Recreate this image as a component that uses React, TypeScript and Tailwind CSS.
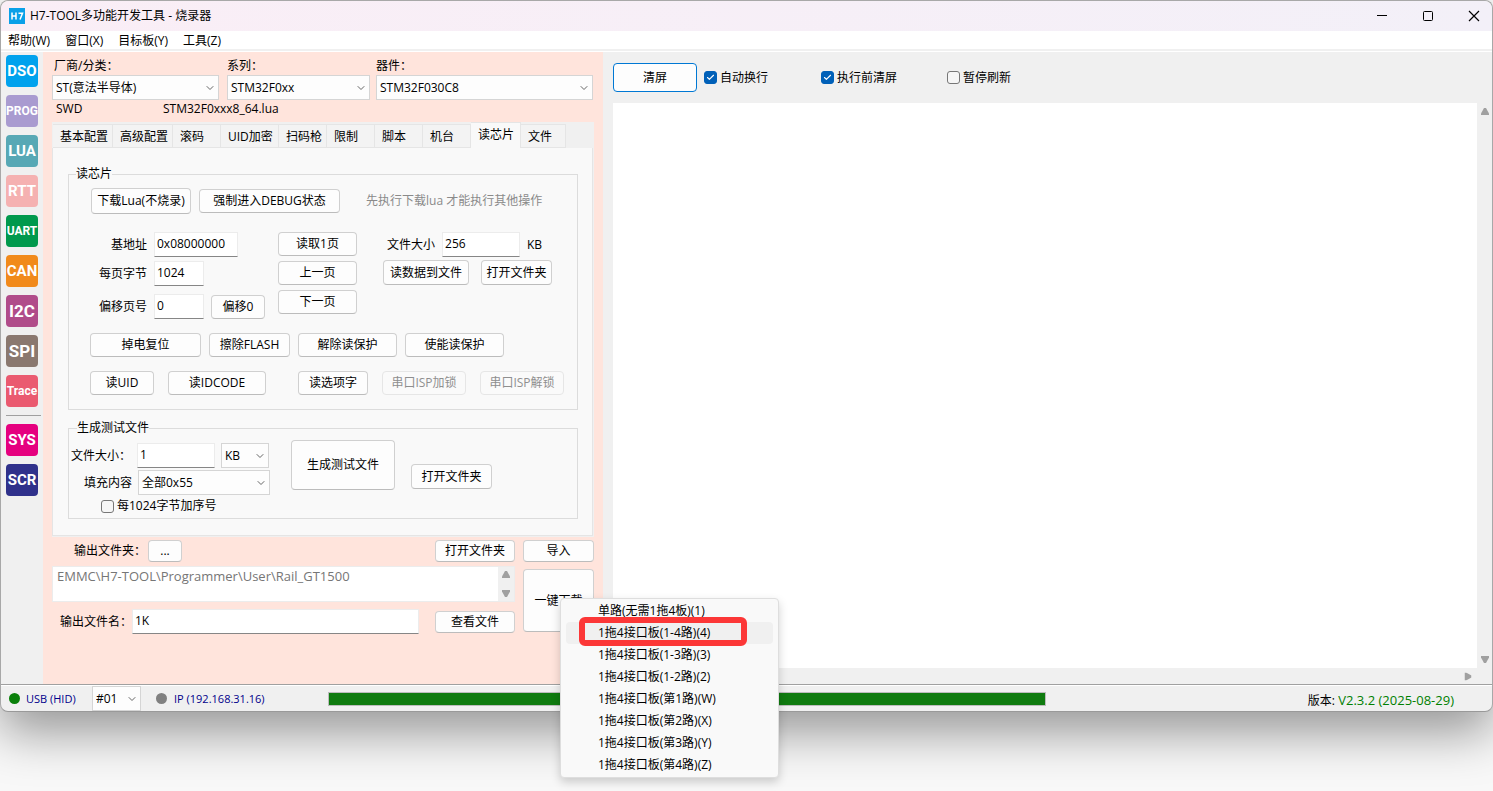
import type { ReactNode } from 'react';
import clsx from 'clsx';
import { Check, ChevronDown } from 'lucide-react';

const menus = ['帮助(W)', '窗口(X)', '目标板(Y)', '工具(Z)'];

const tools = [
  { name: 'DSO', style: 'bg-[#00a2ed] text-[15px]' },
  { name: 'PROG', style: 'bg-[#a99bd0] text-xs' },
  { name: 'LUA', style: 'bg-[#57a8b5] text-[15px]' },
  { name: 'RTT', style: 'bg-[#f5b1b1] text-[15px]' },
  { name: 'UART', style: 'bg-[#00994d] text-xs' },
  { name: 'CAN', style: 'bg-[#f18a1b] text-[15px]' },
  { name: 'I2C', style: 'bg-[#b04c8a] text-[17px]' },
  { name: 'SPI', style: 'bg-[#8a786f] text-[17px]' },
  { name: 'Trace', style: 'bg-[#ea5a70] text-xs' },
];

const systemTools = [
  { name: 'SYS', style: 'bg-[#e5007f] text-[15px]' },
  { name: 'SCR', style: 'bg-[#2f318b] text-[15px]' },
];

const tabs = [
  { label: '基本配置', width: 'w-[60px]' },
  { label: '高级配置', width: 'w-[60px]' },
  { label: '滚码', width: 'w-12' },
  { label: 'UID加密', width: 'w-[58px]' },
  { label: '扫码枪', width: 'w-12' },
  { label: '限制', width: 'w-12' },
  { label: '脚本', width: 'w-12' },
  { label: '机台', width: 'w-12' },
  { label: '读芯片', width: 'w-[50px]' },
  { label: '文件', width: 'w-[45px]' },
];

const downloadOptions = [
  '单路(无需1拖4板)(1)',
  '1拖4接口板(1-4路)(4)',
  '1拖4接口板(1-3路)(3)',
  '1拖4接口板(1-2路)(2)',
  '1拖4接口板(第1路)(W)',
  '1拖4接口板(第2路)(X)',
  '1拖4接口板(第3路)(Y)',
  '1拖4接口板(第4路)(Z)',
];

function Button({ children, className, disabled }: { children: ReactNode; className?: string; disabled?: boolean }) {
  return (
    <button
      type="button"
      disabled={disabled}
      className={clsx(
        'shrink-0 rounded border whitespace-nowrap',
        disabled ? 'border-[#e6e6e6] bg-[#fafafa] text-[#8f8f8f]' : 'border-[#d0d0d0] border-b-[#bcbcbc] bg-[#fdfdfd]',
        className,
      )}
    >
      {children}
    </button>
  );
}

function TextInput({ id, value, className }: { id: string; value: string; className?: string }) {
  return (
    <input
      id={id}
      type="text"
      defaultValue={value}
      className={clsx('h-[25px] border border-[#ececec] border-b-[#868686] bg-white px-[2px] pb-[2px]', className)}
    />
  );
}

function Select({ id, value, className, label }: { id: string; value: string; className?: string; label?: string }) {
  return (
    <div className={clsx('relative h-[25px]', className)}>
      <select
        id={id}
        aria-label={label}
        defaultValue={value}
        className="block h-full w-full appearance-none border border-[#d5d5d5] bg-[#fdfdfd] pl-[3px]"
      >
        <option>{value}</option>
      </select>
      <ChevronDown size={12} strokeWidth={2} className="pointer-events-none absolute top-[7px] right-[3px] text-[#666]" />
    </div>
  );
}

function CheckBox({ label, checked }: { label: string; checked?: boolean }) {
  return (
    <label className="flex items-center gap-[3px] whitespace-nowrap">
      <span className="grid">
        <input
          type="checkbox"
          defaultChecked={checked}
          className="peer col-start-1 row-start-1 size-[13px] appearance-none rounded-[3px] border border-[#777] bg-[#f6f6f6] checked:border-[#0060b8] checked:bg-[#0060b8]"
        />
        <Check
          size={9}
          strokeWidth={3}
          className="pointer-events-none invisible col-start-1 row-start-1 place-self-center text-white peer-checked:visible"
        />
      </span>
      {label}
    </label>
  );
}

function Triangle({ className }: { className?: string }) {
  return (
    <svg viewBox="0 0 8 7" className={clsx('h-[7px] w-2 text-[#a0a0a0]', className)} fill="currentColor">
      <path d="M3 0h2l3 5.500v1.500H0V5.500z" />
    </svg>
  );
}

function ToolButton({ name, style }: { name: string; style: string }) {
  return (
    <button
      type="button"
      className={clsx(
        'flex h-8 w-8 items-center justify-center rounded font-["Roboto",sans-serif] font-bold text-white',
        style,
      )}
    >
      {name}
    </button>
  );
}

function TitleBar() {
  return (
    <header className="flex h-[30px] items-center rounded-t-lg bg-gradient-to-r from-[#faeef6] to-[#f3f0f8] pl-2">
      <svg viewBox="0 0 16 16" className="size-4">
        <rect width="16" height="16" fill="#0aa0e8" />
        <path d="M3 4.500v7M3 8h4M7 4.500v7M9.500 5.200h4L11 11.500" fill="none" stroke="#fff" strokeWidth="1.500" />
      </svg>
      <h1 className="ml-[5px] flex-1">H7-TOOL多功能开发工具 - 烧录器</h1>
      <div className="flex gap-[10px]">
        <button type="button" aria-label="最小化" className="flex w-9 justify-center">
          <svg viewBox="0 0 12 12" className="size-3" fill="none" stroke="#000">
            <path d="M1 5.500h10" />
          </svg>
        </button>
        <button type="button" aria-label="最大化" className="flex w-9 justify-center">
          <svg viewBox="0 0 12 12" className="size-3" fill="none" stroke="#000">
            <rect x="1.500" y="1.500" width="9" height="9" rx="1" />
          </svg>
        </button>
        <button type="button" aria-label="关闭" className="flex w-9 justify-center">
          <svg viewBox="0 0 12 12" className="size-3" fill="none" stroke="#000" strokeWidth="1.200">
            <path d="M1 1l10 10M11 1L1 11" />
          </svg>
        </button>
      </div>
    </header>
  );
}

function ReadChipGroup() {
  return (
    <fieldset className="border border-[#dcdcdc] pb-[14px]">
      <legend className="ml-[7px] h-4">读芯片</legend>

      <div className="mt-[6px] ml-[22px] flex items-center gap-2">
        <Button className="h-[26px] w-[100px]">下载Lua(不烧录)</Button>
        <Button className="h-6 w-[141px]">强制进入DEBUG状态</Button>
        <span className="ml-[18px] text-[#8a8a8a]">先执行下载lua 才能执行其他操作</span>
      </div>

      <div className="mt-[18px] ml-[22px] flex items-start">
        {/* Address and page settings */}
        <div className="flex w-[187px] flex-col gap-1">
          <div className="flex items-center gap-[7px]">
            <label htmlFor="base" className="w-14 text-right">基地址</label>
            <TextInput id="base" value="0x08000000" className="w-[84px]" />
          </div>
          <div className="flex items-center gap-[7px]">
            <label htmlFor="page-size" className="w-14 text-right">每页字节</label>
            <TextInput id="page-size" value="1024" className="w-[50px]" />
          </div>
          <div className="mt-1 flex items-center gap-[7px]">
            <label htmlFor="offset" className="w-14 text-right">偏移页号</label>
            <TextInput id="offset" value="0" className="w-[50px]" />
            <Button className="h-6 w-[54px]">偏移0</Button>
          </div>
        </div>

        {/* Paging */}
        <div className="flex w-[79px] flex-col gap-[5px]">
          <Button className="h-6">读取1页</Button>
          <Button className="h-6">上一页</Button>
          <Button className="h-6">下一页</Button>
        </div>

        {/* Dump to file */}
        <div className="ml-[26px] flex flex-col gap-[3px]">
          <div className="flex items-center gap-[7px] pl-1">
            <label htmlFor="dump-size">文件大小</label>
            <TextInput id="dump-size" value="256" className="w-[78px]" />
            <span>KB</span>
          </div>
          <div className="flex gap-3">
            <Button className="h-[25px] w-[86px]">读数据到文件</Button>
            <Button className="h-[25px] w-[71px]">打开文件夹</Button>
          </div>
        </div>
      </div>

      <div className="mt-[14px] ml-[21px] flex gap-2">
        <Button className="h-6 w-[111px]">掉电复位</Button>
        <Button className="h-6 w-[81px]">擦除FLASH</Button>
        <Button className="h-6 w-[99px]">解除读保护</Button>
        <Button className="h-6 w-[99px]">使能读保护</Button>
      </div>

      <div className="mt-[14px] ml-[21px] flex gap-[14px]">
        <Button className="h-6 w-16">读UID</Button>
        <Button className="h-6 w-[98px]">读IDCODE</Button>
        <Button className="ml-[18px] h-6 w-[70px]">读选项字</Button>
        <Button disabled className="h-6 w-[84px]">串口ISP加锁</Button>
        <Button disabled className="h-6 w-[84px]">串口ISP解锁</Button>
      </div>
    </fieldset>
  );
}

function TestFileGroup() {
  return (
    <fieldset className="mt-[10px] border border-[#dcdcdc] pb-1">
      <legend className="ml-2 h-4">生成测试文件</legend>
      <div className="flex items-start">
        <div className="mt-[7px] flex w-[201px] flex-col gap-[2px]">
          <div className="flex items-center">
            <label htmlFor="test-size" className="w-[68px] pl-[2px]">文件大小：</label>
            <TextInput id="test-size" value="1" className="w-[78px]" />
            <Select id="test-unit" value="KB" label="单位" className="ml-[6px] w-12" />
          </div>
          <div className="flex items-center">
            <label htmlFor="fill" className="w-[69px] pr-[6px] text-right">填充内容</label>
            <Select id="fill" value="全部0x55" className="w-[132px]" />
          </div>
          <div className="mt-[1px] ml-8">
            <CheckBox label="每1024字节加序号" />
          </div>
        </div>
        <Button className="mt-1 ml-[21px] h-[50px] w-[104px]">生成测试文件</Button>
        <Button className="mt-7 ml-4 h-[25px] w-[81px]">打开文件夹</Button>
      </div>
    </fieldset>
  );
}

function DownloadMenu() {
  return (
    <ul
      role="menu"
      className="absolute top-[29px] left-[37px] z-10 w-[219px] rounded border border-[#dedede] bg-[#f9f9f9] py-[1px] shadow-[0_4px_10px_rgba(0,0,0,0.18)]"
    >
      {downloadOptions.map((option, index) => (
        <li key={option} role="none" className={clsx('relative mx-[5px] rounded', index === 1 && 'bg-[#f0f0f0]')}>
          <button type="button" role="menuitem" className="block h-[22px] w-full pl-8 text-left">
            {option}
          </button>
          {index === 1 && (
            <span className="pointer-events-none absolute -top-[5px] left-[13px] h-[29px] w-[168px] rounded-md border-[6px] border-[#fc3737]" />
          )}
        </li>
      ))}
    </ul>
  );
}

function OutputSection() {
  return (
    <section className="mt-[3px] flex items-start gap-2">
      <div className="w-[463px]">
        <div className="flex items-center">
          <span className="w-24 pl-[22px]">输出文件夹：</span>
          <Button className="h-[22px] w-[34px]">...</Button>
          <Button className="ml-auto h-[22px] w-20">打开文件夹</Button>
        </div>
        <div className="mt-1 flex h-9 border border-[#ececec] bg-white">
          <textarea
            readOnly
            aria-label="输出文件夹"
            className="flex-1 resize-none overflow-hidden pt-[1px] pl-1 text-[13px] text-[#767676]"
            defaultValue={'EMMC\\H7-TOOL\\Programmer\\User\\Rail_GT1500'}
          />
          <div className="flex w-4 flex-col items-center justify-between bg-[#f0f0f0] py-1">
            <Triangle />
            <Triangle className="rotate-180" />
          </div>
        </div>
        <div className="mt-[7px] flex items-center">
          <label htmlFor="out-name" className="w-20 pl-2">输出文件名：</label>
          <TextInput id="out-name" value="1K" className="w-[287px]" />
          <Button className="ml-auto h-[22px] w-20">查看文件</Button>
        </div>
      </div>
      <div className="flex w-[71px] flex-col gap-[7px]">
        <Button className="h-[22px]">导入</Button>
        <div className="relative flex flex-col">
          <Button className="h-[63px]">一键下载</Button>
          <DownloadMenu />
        </div>
      </div>
    </section>
  );
}

function ProgrammerPanel() {
  return (
    <main className="w-[560px] shrink-0 bg-[#ffe4dc] px-[9px] pt-[6px] pb-[50px]">
      <div className="flex">
        <div className="w-[167px]">
          <label htmlFor="vendor" className="mb-[1px] block pl-[2px]">厂商/分类：</label>
          <Select id="vendor" value="ST(意法半导体)" />
        </div>
        <div className="ml-2 w-[143px]">
          <label htmlFor="series" className="mb-[1px] block">系列：</label>
          <Select id="series" value="STM32F0xx" />
        </div>
        <div className="ml-[6px] w-[217px]">
          <label htmlFor="device" className="mb-[1px] block">器件：</label>
          <Select id="device" value="STM32F030C8" />
        </div>
      </div>
      <div className="mt-[1px] flex pl-1">
        <span className="w-[107px]">SWD</span>
        <span>STM32F0xxx8_64.lua</span>
      </div>

      <div className="mt-[5px] bg-[#f0f0f0] pr-[1px] pb-[1px]">
        <div role="tablist" className="flex items-end pl-[1px]">
          {tabs.map((tab) => {
            const active = tab.label === '读芯片';
            return (
              <button
                key={tab.label}
                type="button"
                role="tab"
                aria-selected={active}
                className={clsx(
                  'border-t border-r border-[#e5e5e5] pl-[7px] text-left whitespace-nowrap',
                  tab.width,
                  active ? 'h-[26px] bg-[#f9f9f9] pb-[2px]' : 'h-6 border-b bg-[#f3f3f3] pt-[2px]',
                )}
              >
                {tab.label}
              </button>
            );
          })}
        </div>
        <div className="border border-t-0 border-[#e5e5e5] bg-[#f9f9f9] pt-[18px] pr-[14px] pb-4 pl-[15px]">
          <ReadChipGroup />
          <TestFileGroup />
        </div>
      </div>

      <OutputSection />
    </main>
  );
}

function LogPanel() {
  return (
    <section className="flex min-w-0 flex-1 flex-col pl-[10px]">
      <div className="flex h-[51px] items-center">
        <button type="button" className="h-[29px] w-[84px] rounded border border-[#0078d4] bg-[#fdfdfd]">
          清屏
        </button>
        <div className="ml-[7px] w-[117px]">
          <CheckBox label="自动换行" checked />
        </div>
        <div className="w-[126px]">
          <CheckBox label="执行前清屏" checked />
        </div>
        <CheckBox label="暂停刷新" />
      </div>
      <div className="flex flex-1">
        <textarea aria-label="日志" className="flex-1 resize-none bg-white" />
        <div className="flex w-[15px] flex-col items-center justify-between py-[5px]">
          <Triangle />
          <Triangle className="rotate-180" />
        </div>
      </div>
      <div className="flex h-4 items-center justify-end pr-5">
        <Triangle className="rotate-90" />
      </div>
    </section>
  );
}

function StatusBar() {
  return (
    <footer className="flex h-[26px] items-center border-t border-white text-[11px] text-[#00008b]">
      <span className="ml-2 size-[11px] rounded-full bg-[#0a800a]" />
      <span className="ml-[6px] w-[66px]">USB (HID)</span>
      <Select id="channel" value="#01" label="通道" className="w-[49px] text-xs text-black" />
      <span className="ml-[15px] size-[11px] rounded-full bg-[#808080]" />
      <span className="ml-[7px] w-[154px]">IP (192.168.31.16)</span>
      <div
        role="progressbar"
        aria-label="进度"
        aria-valuenow={100}
        className="h-[14px] flex-1 border border-[#bcbcbc] bg-[#0f7b0f]"
      />
      <p className="w-[446px] pt-1 pr-[38px] text-right text-[13px] text-[#008000]">
        <span className="text-xs text-black">版本:</span> V2.3.2 (2025-08-29)
      </p>
    </footer>
  );
}

export default function App() {
  return (
    <div className='min-h-screen overflow-hidden bg-[#f8f8f8] font-["Open_Sans","Noto_Sans_CJK_SC",sans-serif] text-xs leading-4 text-black'>
      <div className="rounded-lg border border-[#a8a8a8] border-b-[#999] bg-[#f0f0f0] shadow-[0_20px_50px_rgba(0,0,0,0.4)]">
        <TitleBar />
        <nav className="flex h-[18px] items-end gap-[15px] bg-white pl-[7px]">
          {menus.map((menu) => (
            <button key={menu} type="button">
              {menu}
            </button>
          ))}
        </nav>
        <div className="mt-[2px] flex border-t border-b border-t-white border-b-[#a0a0a0]">
          <aside className="flex w-[42px] shrink-0 flex-col gap-2 pt-[3px] pl-[5px]">
            {tools.map((tool) => (
              <ToolButton key={tool.name} {...tool} />
            ))}
            <hr className="w-[35px] border-[#a0a0a0]" />
            {systemTools.map((tool) => (
              <ToolButton key={tool.name} {...tool} />
            ))}
          </aside>
          <ProgrammerPanel />
          <LogPanel />
        </div>
        <StatusBar />
      </div>
    </div>
  );
}
